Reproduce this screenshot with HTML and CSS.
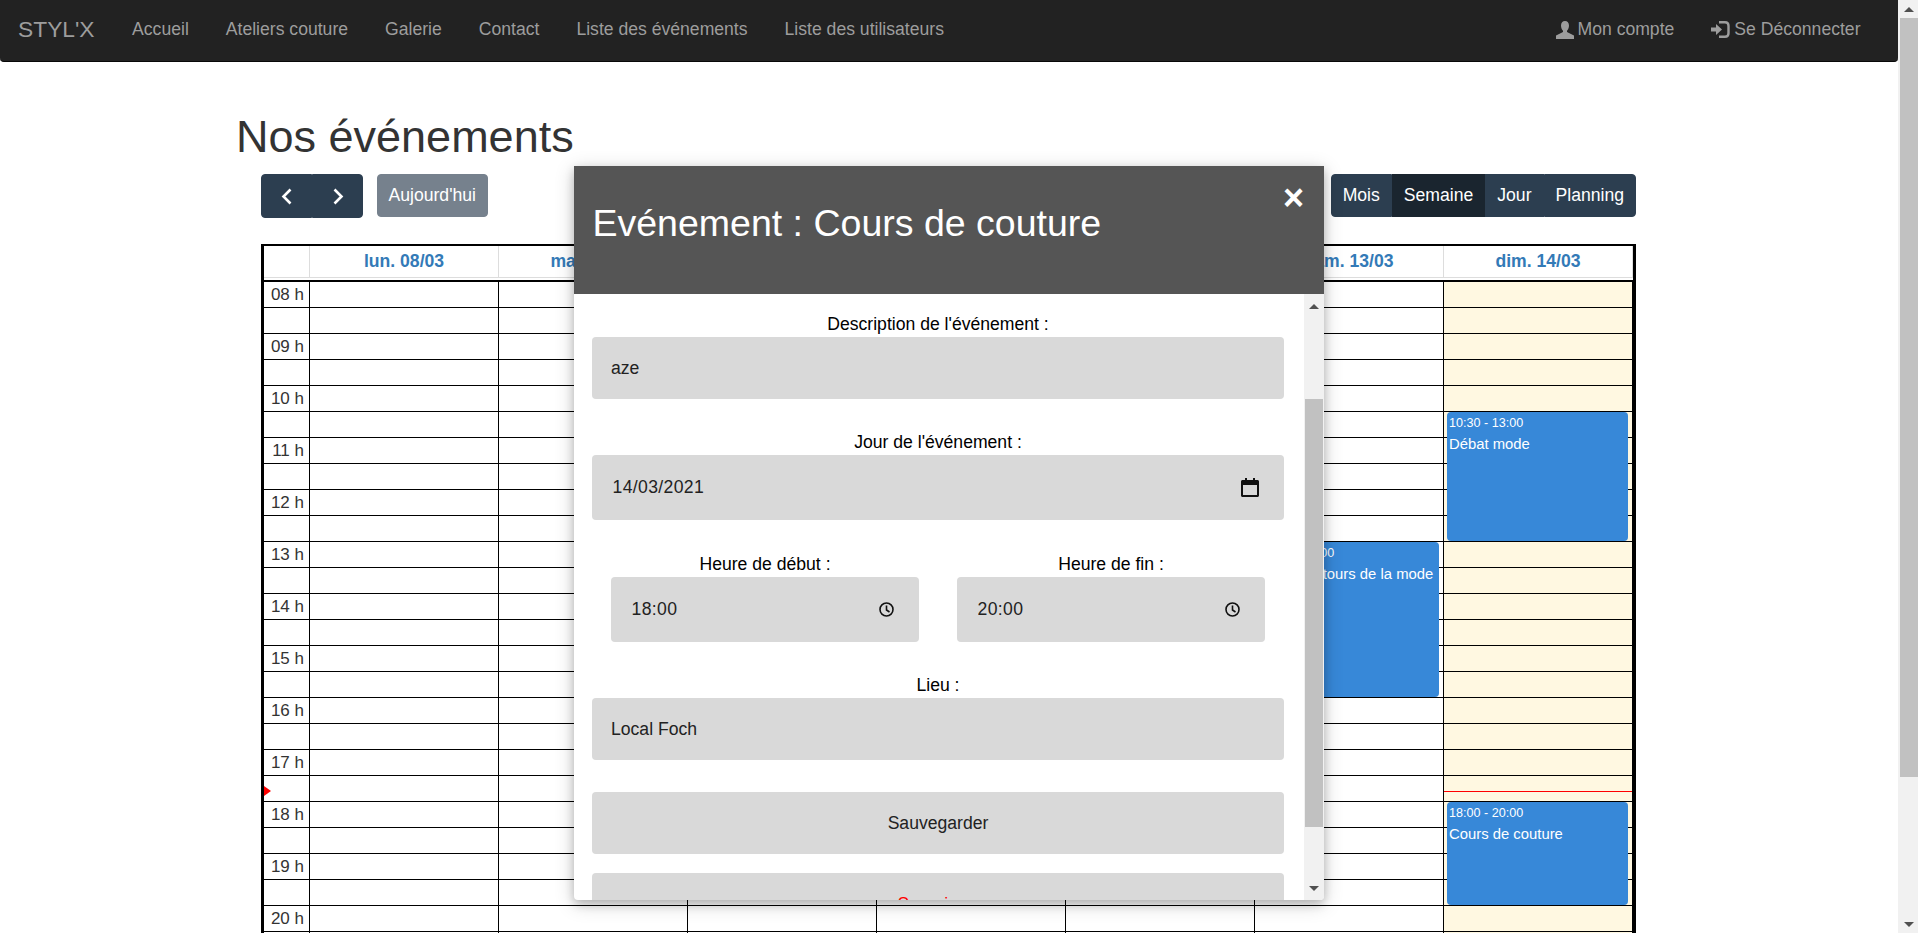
FILE: index.html
```html
<!DOCTYPE html>
<html lang="fr">
<head>
  <meta charset="UTF-8" />
  <title>Nos événements - STYL'X</title>
  <link rel="stylesheet" href="styles.css">
</head>
<body>
  <div class="page">
    <div class="main">
      <nav class="navbar">
        <a class="brand" href="#">STYL'X</a>
        <a class="nav-link" href="#">Accueil</a>
        <a class="nav-link" href="#">Ateliers couture</a>
        <a class="nav-link" href="#">Galerie</a>
        <a class="nav-link" href="#">Contact</a>
        <a class="nav-link" href="#">Liste des événements</a>
        <a class="nav-link" href="#">Liste des utilisateurs</a>
        <div class="nav-right">
          <a class="nav-link" href="#">
            <svg class="nav-icon" width="18" height="18" viewBox="0 0 18 18"><path d="M9 0C6.5 0 5 2 5 4.5c0 2 .8 4 2 5.2V11L0 14.5V18h18v-3.5L11 11V9.7c1.2-1.2 2-3.2 2-5.2C13 2 11.500 0 9 0z"/></svg>
            Mon compte
          </a>
          <a class="nav-link" href="#">
            <svg class="nav-icon" width="19" height="17" viewBox="0 0 19 17"><polygon points="0,6.500 5,6.500 5,3 11,8.500 5,14 5,10.500 0,10.500"/><path class="icon-stroke" d="M8 1.200h6c2 0 3.500 1.500 3.500 3.500v7.600c0 2-1.500 3.500-3.500 3.500H8"/></svg>
            Se Déconnecter
          </a>
        </div>
      </nav>

      <h1 class="page-title">Nos événements</h1>

      <section class="calendar">
        <div class="toolbar">
          <div class="toolbar-left">
            <div class="btn-group">
              <button class="btn btn-arrow"><svg width="12" height="17" viewBox="0 0 12 17"><polyline points="9.500,1.500 2.500,8.500 9.500,15.500"/></svg></button>
              <button class="btn btn-arrow"><svg width="12" height="17" viewBox="0 0 12 17"><polyline points="2.500,1.500 9.500,8.500 2.500,15.500"/></svg></button>
            </div>
            <button class="btn btn-today">Aujourd'hui</button>
          </div>
          <div class="btn-group">
            <button class="btn">Mois</button>
            <button class="btn active">Semaine</button>
            <button class="btn">Jour</button>
            <button class="btn">Planning</button>
          </div>
        </div>

        <div class="cal-grid">
          <div class="cal-head">
            <div class="head-cell"></div>
            <div class="head-cell">lun. 08/03</div>
            <div class="head-cell">mar. 09/03</div>
            <div class="head-cell">mer. 10/03</div>
            <div class="head-cell">jeu. 11/03</div>
            <div class="head-cell">ven. 12/03</div>
            <div class="head-cell">sam. 13/03</div>
            <div class="head-cell">dim. 14/03</div>
          </div>

          <div class="cal-body">
            <div class="cal-cols">
              <div class="col"></div>
              <div class="col"></div>
              <div class="col"></div>
              <div class="col"></div>
              <div class="col"></div>
              <div class="col"></div>
              <div class="col"></div>
              <div class="col col-today"></div>
            </div>

            <div class="slots">
              <div class="slot">08 h</div><div class="slot"></div>
              <div class="slot">09 h</div><div class="slot"></div>
              <div class="slot">10 h</div><div class="slot"></div>
              <div class="slot">11 h</div><div class="slot"></div>
              <div class="slot">12 h</div><div class="slot"></div>
              <div class="slot">13 h</div><div class="slot"></div>
              <div class="slot">14 h</div><div class="slot"></div>
              <div class="slot">15 h</div><div class="slot"></div>
              <div class="slot">16 h</div><div class="slot"></div>
              <div class="slot">17 h</div><div class="slot"></div>
              <div class="slot">18 h</div><div class="slot"></div>
              <div class="slot">19 h</div><div class="slot"></div>
              <div class="slot">20 h</div><div class="slot"></div>
            </div>

            <div class="event event-debat">
              <div class="event-time">10:30 - 13:00</div>
              <div class="event-title">Débat mode</div>
            </div>
            <div class="event event-tours">
              <div class="event-time">13:00 - 16:00</div>
              <div class="event-title">Les mille tours de la mode</div>
            </div>
            <div class="event event-cours">
              <div class="event-time">18:00 - 20:00</div>
              <div class="event-title">Cours de couture</div>
            </div>

            <div class="now-arrow"></div>
            <div class="now-line"></div>
          </div>
        </div>
      </section>
    </div>

    <div class="scrollbar">
      <div class="sb-btn"><span class="arrow-up"></span></div>
      <div class="sb-thumb"></div>
      <div class="sb-btn sb-end"><span class="arrow-down"></span></div>
    </div>
  </div>

  <div class="modal">
    <header class="modal-header">
      <h2 class="modal-title">Evénement : Cours de couture</h2>
      <button class="modal-close">×</button>
    </header>
    <div class="modal-body">
      <form class="modal-form">
        <div class="field">
          <label for="description">Description de l'événement :</label>
          <div class="control"><input type="text" id="description" value="aze" /></div>
        </div>

        <div class="field">
          <label for="jour">Jour de l'événement :</label>
          <div class="control control-tall">
            <input class="input-date" type="text" id="jour" value="14/03/2021" />
            <svg class="icon-cal" width="18" height="19" viewBox="0 0 18 19"><path d="M4 0h2v2h6V0h2v2h2.500c.8 0 1.500.7 1.500 1.500v14c0 .8-.7 1.500-1.500 1.500h-15C.7 19 0 18.300 0 17.500v-14C0 2.700.7 2 1.500 2H4zM2 7v10h14V7z"/></svg>
          </div>
        </div>

        <div class="field-row">
          <div class="field">
            <label for="debut">Heure de début :</label>
            <div class="control control-tall">
              <input class="input-date" type="text" id="debut" value="18:00" />
              <svg class="icon-clock" width="15" height="15" viewBox="0 0 15 15"><circle cx="7.500" cy="7.500" r="6.500"/><polyline points="7.500,3.500 7.500,8 10.500,10"/></svg>
            </div>
          </div>
          <div class="field">
            <label for="fin">Heure de fin :</label>
            <div class="control control-tall">
              <input class="input-date" type="text" id="fin" value="20:00" />
              <svg class="icon-clock" width="15" height="15" viewBox="0 0 15 15"><circle cx="7.500" cy="7.500" r="6.500"/><polyline points="7.500,3.500 7.500,8 10.500,10"/></svg>
            </div>
          </div>
        </div>

        <div class="field">
          <label for="lieu">Lieu :</label>
          <div class="control"><input type="text" id="lieu" value="Local Foch" /></div>
        </div>

        <button type="button" class="form-btn">Sauvegarder</button>
        <button type="button" class="form-btn form-btn-danger">Supprimer</button>
      </form>

      <div class="scrollbar scrollbar-modal">
        <div class="sb-btn"><span class="arrow-up"></span></div>
        <div class="sb-thumb"></div>
        <div class="sb-btn sb-end"><span class="arrow-down"></span></div>
      </div>
    </div>
  </div>
</body>
</html>
```

FILE: styles.css
```css
* {
  box-sizing: border-box;
}
body {
  margin: 0;
  height: 933px;
  overflow: hidden;
  font-family: "Liberation Sans", Arial, sans-serif;
  font-size: 17.6px;
  color: #333;
  background: #fff;
}
.page {
  display: flex;
  height: 933px;
  overflow: hidden;
}
.main {
  flex: 1;
  min-width: 0;
}

/* navbar */
.navbar {
  display: flex;
  align-items: center;
  height: 62px;
  padding: 0 0 2px 18px;
  background: #222;
  border-bottom: 1px solid #080808;
  border-radius: 0 0 4px 4px;
}
.navbar a {
  color: #9d9d9d;
  text-decoration: none;
}
.brand {
  font-size: 22.800px;
  margin-right: 19px;
}
.nav-link {
  display: flex;
  align-items: center;
  padding: 0 18.500px;
}
.nav-right {
  display: flex;
  margin-left: auto;
  padding-right: 19px;
}
.nav-icon {
  fill: #9d9d9d;
  margin-right: 4px;
}
.icon-stroke {
  fill: none;
  stroke: #9d9d9d;
  stroke-width: 2.4;
}

.page-title {
  margin: 51px 0 13px 236px;
  font-size: 45px;
  line-height: 48px;
  font-weight: 400;
}

/* calendar */
.calendar {
  width: 1375px;
  margin-left: 261px;
}
.toolbar {
  display: flex;
  justify-content: space-between;
  align-items: flex-start;
  margin-bottom: 26px;
}
.toolbar-left {
  display: flex;
  align-items: flex-start;
  gap: 13.500px;
}
.btn-group {
  display: flex;
}
.btn {
  height: 43px;
  padding: 0 11px;
  border: 1px solid #2c3e50;
  background: #2c3e50;
  color: #fff;
  font: inherit;
}
.btn-group .btn:first-child {
  border-radius: 4px 0 0 4px;
}
.btn-group .btn:last-child {
  border-radius: 0 4px 4px 0;
}
.btn.active {
  background: #1a252f;
  border-color: #1a252f;
}
.btn-arrow {
  display: flex;
  align-items: center;
  justify-content: center;
  width: 51px;
  height: 44px;
  padding: 0;
}
.btn-arrow polyline {
  fill: none;
  stroke: #fff;
  stroke-width: 2.600;
}
.btn-today {
  background: #76818d;
  border-color: #76818d;
  border-radius: 4px;
}

.cal-grid {
  border-top: 2px solid #000;
  border-left: 3px solid #000;
  border-right: 3px solid #000;
}
.cal-head {
  display: grid;
  grid-template-columns: 46px repeat(7, 189px);
  height: 32px;
  margin-bottom: 2px;
  border-bottom: 1px solid #ddd;
}
.head-cell {
  border-right: 1px solid #ddd;
  text-align: center;
  line-height: 31px;
  font-weight: 700;
  color: #337ab7;
}
.cal-body {
  position: relative;
  border-top: 2px solid #000;
}
.cal-cols {
  position: absolute;
  inset: 0;
  display: grid;
  grid-template-columns: 46px repeat(7, 189px);
}
.col {
  border-right: 1px solid #000;
}
.col-today {
  background: #fff8e1;
}
.slots {
  position: relative;
}
.slot {
  height: 26px;
  width: 100%;
  padding-right: 1329px;
  border-bottom: 1px solid #000;
  text-align: right;
  font-size: 17px;
  line-height: 25px;
  white-space: nowrap;
}
.event {
  position: absolute;
  width: 181px;
  padding: 2px;
  border-radius: 4px;
  background: #3788d8;
  color: #fff;
  white-space: nowrap;
  overflow: hidden;
}
.event-time {
  font-size: 12.600px;
  line-height: 18px;
  margin-bottom: 3px;
}
.event-title {
  font-size: 14.850px;
  line-height: 18px;
}
.event-debat {
  left: 1183px;
  top: 130px;
  height: 129px;
}
.event-tours {
  left: 994px;
  top: 260px;
  height: 155px;
}
.event-cours {
  left: 1183px;
  top: 520px;
  height: 103px;
}
.now-arrow {
  position: absolute;
  left: 0;
  top: 504px;
  border-top: 5px solid transparent;
  border-bottom: 5px solid transparent;
  border-left: 7px solid #f00;
}
.now-line {
  position: absolute;
  left: 1180px;
  width: 188px;
  top: 509px;
  height: 1px;
  background: #f00;
}

/* fake scrollbars */
.scrollbar {
  display: flex;
  flex-direction: column;
  flex: none;
  width: 20px;
  background: #f1f1f1;
}
.sb-btn {
  display: flex;
  align-items: center;
  justify-content: center;
  height: 18px;
  padding-left: 2px;
}
.sb-end {
  margin-top: auto;
}
.sb-thumb {
  width: 18px;
  height: 759px;
  margin-left: 2px;
  background: #c1c1c1;
}
.arrow-up,
.arrow-down {
  border-left: 5px solid transparent;
  border-right: 5px solid transparent;
}
.arrow-up {
  border-bottom: 5px solid #505050;
}
.arrow-down {
  border-top: 5px solid #505050;
}
.scrollbar-modal .sb-btn {
  height: 24px;
  padding-left: 0;
}
.scrollbar-modal .sb-thumb {
  height: 428px;
  margin-top: 81px;
  margin-left: 1px;
}

/* modal */
.modal {
  position: absolute;
  left: 574px;
  top: 166px;
  width: 750px;
  height: 734px;
  display: flex;
  flex-direction: column;
  background: #fff;
  border-radius: 0 0 4px 4px;
  box-shadow: 0 4px 10px rgba(0, 0, 0, .2), 0 4px 20px rgba(0, 0, 0, .19);
  overflow: hidden;
}
.modal-header {
  position: relative;
  flex: none;
  height: 128px;
  padding: 36px 18px 0 18.500px;
  background: #555;
  color: #fff;
}
.modal-title {
  margin: 0;
  font-size: 37.500px;
  line-height: 42px;
  font-weight: 400;
}
.modal-close {
  position: absolute;
  right: 20px;
  top: 11px;
  padding: 0;
  border: none;
  background: none;
  color: #fff;
  font: 700 36px/42px "Liberation Sans", Arial, sans-serif;
}
.modal-body {
  display: flex;
  flex: 1;
  min-height: 0;
}
.modal-form {
  flex: 1;
  min-width: 0;
  height: 606px;
  padding: 19px 20px 0 18px;
  overflow: hidden;
}
.field {
  margin-bottom: 32px;
}
.field label {
  display: block;
  margin-bottom: 2px;
  text-align: center;
  line-height: 22px;
  color: #000;
}
.field-row {
  display: grid;
  grid-template-columns: 1fr 1fr;
  gap: 38px;
  padding: 0 19px;
  margin-top: 33px;
}
.control {
  display: flex;
  align-items: center;
  height: 62px;
  padding: 0 19px;
  border-radius: 4px;
  background: #d9d9d9;
}
.control-tall {
  height: 65px;
}
.control input {
  flex: 1;
  min-width: 0;
  padding: 0;
  border: none;
  background: none;
  font: inherit;
  color: #222;
}
.input-date {
  margin-left: 1.500px;
  letter-spacing: .35px;
}
.icon-cal {
  fill: #111;
  margin-right: 6px;
}
.icon-clock {
  fill: none;
  stroke: #111;
  stroke-width: 1.600;
  margin-right: 6px;
}
.form-btn {
  display: block;
  width: 100%;
  height: 62px;
  margin-bottom: 19px;
  padding: 0;
  border: none;
  border-radius: 4px;
  background: #d9d9d9;
  font: inherit;
  color: #222;
}
.form-btn-danger {
  color: #f00;
}
```
